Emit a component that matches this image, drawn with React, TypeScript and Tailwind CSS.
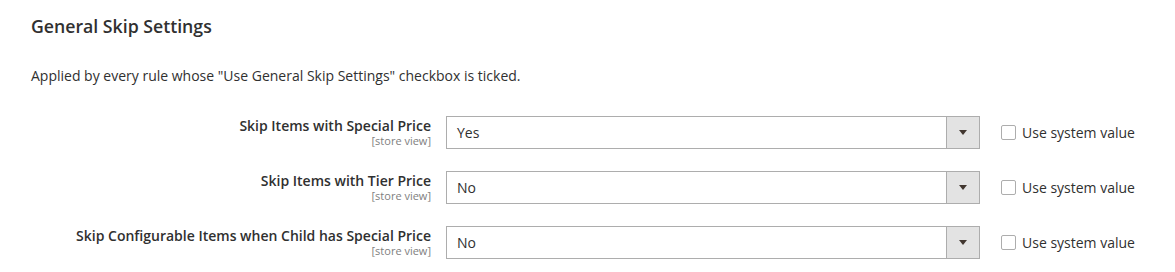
interface SkipRow {
  label: string;
  value: string;
}

const ROWS: SkipRow[] = [
  { label: "Skip Items with Special Price", value: "Yes" },
  { label: "Skip Items with Tier Price", value: "No" },
  { label: "Skip Configurable Items when Child has Special Price", value: "No" },
];

function SelectBox({ value }: { value: string }) {
  return (
    <div className="flex w-[534px] h-[33px] border border-[#adadad] bg-white">
      <div className="flex-1 flex items-center pl-[10px] text-[14px] text-[#303030]">{value}</div>
      <div className="w-[33px] flex items-center justify-center bg-[#e3e3e3] border-l border-[#adadad]">
        <span className="block w-0 h-0 border-l-[4px] border-r-[4px] border-t-[5px] border-l-transparent border-r-transparent border-t-[#41362f]" />
      </div>
    </div>
  );
}

export default function App() {
  return (
    <div
      className="w-[1175px] h-[272px] bg-white pl-[31px] pt-[14px] text-[#303030] overflow-hidden"
      style={{ fontFamily: '"Open Sans", "Liberation Sans", sans-serif' }}
    >
      <h2 className="text-[17.7px] font-semibold leading-[24px] text-[#303030]">General Skip Settings</h2>
      <p className="mt-[28px] text-[14px] leading-[20px] text-[#303030]">
        Applied by every rule whose "Use General Skip Settings" checkbox is ticked.
      </p>
      <div className="mt-[30px] flex flex-col gap-[22px]">
        {ROWS.map((row) => (
          <div key={row.label} className="flex items-start">
            <div className="w-[400px] text-right">
              <div className="text-[14px] font-semibold leading-[19px] text-[#303030]">{row.label}</div>
              <div className="text-[11px] leading-[12px] text-[#808080]">[store view]</div>
            </div>
            <div className="ml-[15px]">
              <SelectBox value={row.value} />
            </div>
            <label className="ml-[21px] flex items-center gap-[6px] h-[33px] text-[14px] text-[#303030]">
              <span className="block w-[15px] h-[15px] border border-[#adadad] rounded-[2px] bg-white" />
              Use system value
            </label>
          </div>
        ))}
      </div>
    </div>
  );
}
